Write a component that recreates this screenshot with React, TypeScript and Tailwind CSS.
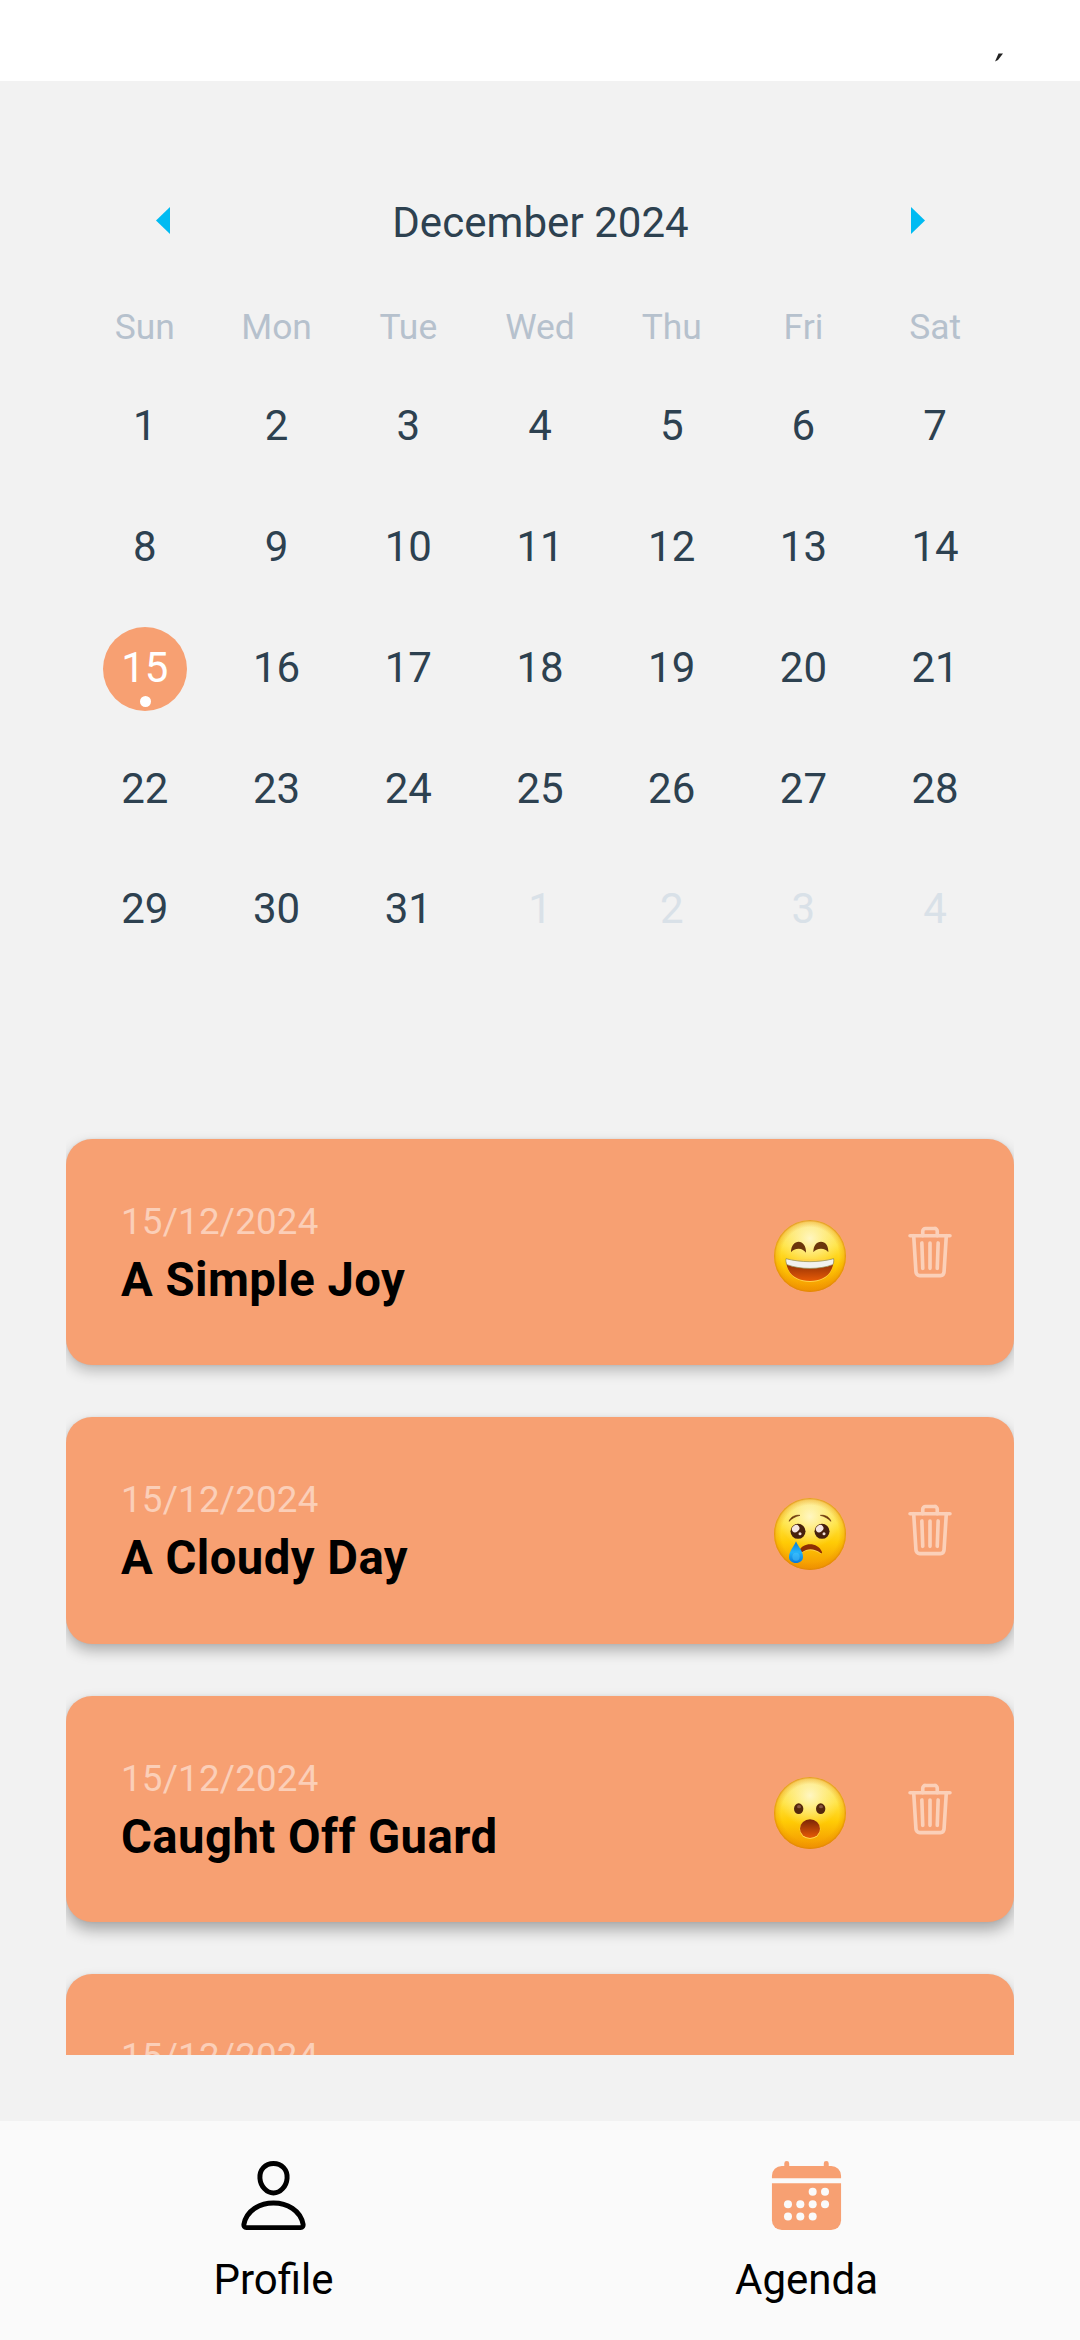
import React from "react";

type Mood = "joy" | "sad" | "wow";

const WEEKDAYS = ["Sun", "Mon", "Tue", "Wed", "Thu", "Fri", "Sat"];
const DAYS = Array.from({ length: 35 }, (_, i) => ({
  day: i < 31 ? i + 1 : i - 30,
  outside: i >= 31,
}));
// Cards lower on the screen cast a stronger shadow.
const ENTRIES: { title: string; date: string; mood: Mood; shadow: string }[] = [
  { title: "A Simple Joy", date: "15/12/2024", mood: "joy", shadow: "shadow-[0_6px_14px_rgba(0,0,0,0.24),0_0_3px_rgba(0,0,0,0.08)]" },
  { title: "A Cloudy Day", date: "15/12/2024", mood: "sad", shadow: "shadow-[0_7px_14px_rgba(0,0,0,0.27),0_0_3px_rgba(0,0,0,0.06)]" },
  { title: "Caught Off Guard", date: "15/12/2024", mood: "wow", shadow: "shadow-[0_8px_15px_rgba(0,0,0,0.31),0_0_3px_rgba(0,0,0,0.06)]" },
  { title: "", date: "15/12/2024", mood: "joy", shadow: "shadow-[0_9px_15px_rgba(0,0,0,0.31),0_0_3px_rgba(0,0,0,0.06)]" },
];

function TrashIcon() {
  return (
    <svg viewBox="0 0 512 512" className="size-[58px]" fill="none" stroke="currentColor" strokeWidth="32" strokeLinecap="round" strokeLinejoin="round">
      <path d="M112 112l20 320c.95 18.49 14.4 32 32 32h184c17.67 0 30.87-13.51 32-32l20-320" />
      <path d="M80 112h352" />
      <path d="M192 112V72a23.93 23.93 0 0 1 24-24h80a23.93 23.93 0 0 1 24 24v40M256 176v224M184 176l8 224M328 176l-8 224" />
    </svg>
  );
}

function PersonIcon() {
  return (
    <svg viewBox="0 0 512 512" className="size-[79px]" fill="none" stroke="currentColor" strokeWidth="32" strokeLinecap="round" strokeLinejoin="round">
      <path d="M344 144c-3.92 52.87-44 96-88 96s-84.15-43.12-88-96c-4-55 35-96 88-96s92 42 88 96z" />
      <path d="M256 304c-87 0-175.3 48-191.64 138.6C62.39 453.52 68.57 464 80 464h352c11.44 0 17.62-10.48 15.65-21.4C431.3 352 343 304 256 304z" />
    </svg>
  );
}

function CalendarIcon() {
  const dots = [
    [296, 232], [376, 232],
    [136, 312], [216, 312], [296, 312], [376, 312],
    [136, 392], [216, 392], [296, 392],
  ];
  return (
    <svg viewBox="0 0 512 512" className="size-[79px] text-[#f7a072]" fill="currentColor">
      <path d="M32 176H480V416a64 64 0 0 1-64 64H96a64 64 0 0 1-64-64z" />
      <path d="M32 144V128a64 64 0 0 1 64-64h16V48.450a16 16 0 0 1 32 0V64H368V48.450a16 16 0 0 1 32 0V64h16a64 64 0 0 1 64 64v16z" />
      {dots.map(([x, y]) => (
        <circle key={`${x}-${y}`} cx={x} cy={y} r="26" fill="#fafafa" />
      ))}
    </svg>
  );
}

function MoodFace({ mood, id }: { mood: Mood; id: string }) {
  const face = `face-${id}`;
  const shine = `shine-${id}`;
  const mouth = `mouth-${id}`;
  const drop = `drop-${id}`;
  const rim = `rim-${id}`;
  return (
    <svg viewBox="0 0 216 216" className="size-[72px]">
      <defs>
        <linearGradient id={face} x1="0" y1="0" x2="0" y2="1">
          <stop offset="0" stopColor="#fbe476" />
          <stop offset=".35" stopColor="#ffe33f" />
          <stop offset=".62" stopColor="#ffcb05" />
          <stop offset="1" stopColor="#f39200" />
        </linearGradient>
        <radialGradient id={shine} cx=".5" cy=".25" r=".45">
          <stop offset="0" stopColor="#fff6c2" stopOpacity="1" />
          <stop offset="1" stopColor="#fff3a0" stopOpacity="0" />
        </radialGradient>
        <radialGradient id={rim}>
          <stop offset=".8" stopColor="#e68a00" stopOpacity="0" />
          <stop offset=".94" stopColor="#e88e00" stopOpacity=".32" />
          <stop offset="1" stopColor="#dc7f0c" stopOpacity=".85" />
        </radialGradient>
        <linearGradient id={mouth} x1="0" y1="0" x2="0" y2="1">
          <stop offset="0" stopColor="#7a2506" />
          <stop offset="1" stopColor="#e85b06" />
        </linearGradient>
        <linearGradient id={drop} x1="0" y1="0" x2="0" y2="1">
          <stop offset="0" stopColor="#0a78cf" />
          <stop offset=".5" stopColor="#25b4fb" />
          <stop offset="1" stopColor="#0877d8" />
        </linearGradient>
      </defs>
      <circle cx="108" cy="108" r="108" fill={`url(#${face})`} />
      <circle cx="108" cy="108" r="105" fill={`url(#${shine})`} />
      <circle cx="108" cy="108" r="108" fill={`url(#${rim})`} />
      {mood === "joy" && (
        <g>
          <path d="M51 97C51 76 62 65 74 65s23 13 22 33c-5-7-12-12-22-12s-18 4-23 11zM118 97c0-21 10-32 23-32s23 12 22 32c-5-7-12-11-22-11s-18 4-23 11z" fill="#6b360c" />
          <path d="M36 118c0 47 32 68 72 68s71-21 71-68z" fill="#ffd24a" />
          <path d="M36 116c0 47 32 67 72 67s71-20 71-67c-40 14-105 14-143 0z" fill={`url(#${mouth})`} />
          <path d="M36 116c45 12 98 12 143 0 1 8 0 14-3 18-40 15-96 15-137 0-3-5-4-11-3-18z" fill="#f2f2ee" stroke="#8c8b4c" strokeWidth="2" />
        </g>
      )}
      {mood === "sad" && (
        <g>
          <path d="M45 70c5-13 18-20 33-18-14 3-23 9-33 18zM139 52c15-2 27 5 32 18-10-9-19-15-32-18z" fill="#6b360c" stroke="#6b360c" strokeWidth="2" strokeLinejoin="round" />
          {[72, 144].map((x) => (
            <g key={x}>
              <circle cx={x} cy="100" r="22.500" fill="#46200d" />
              <ellipse cx={x - 7} cy="92" rx="12" ry="10" transform={`rotate(-38 ${x - 7} 92)`} fill="#f5e6e1" />
              <circle cx={x + 6} cy="107" r="4.500" fill="#f0ddd5" />
            </g>
          ))}
          <path d="M78 158c14-19 49-19 64 7l-2 3c-20-14-40-15-58-2z" fill="#ffd24a" />
          <path d="M76 158c10-26 56-27 68 4 1 3-2 5-4 3-20-14-39-15-56-2z" fill="#8e2d04" />
          <path d="M66 130c6 15 21 30 21 47 0 11-9 18-21 18s-21-7-21-18c0-17 15-32 21-47z" fill={`url(#${drop})`} />
          <ellipse cx="66" cy="176" rx="11" ry="12" fill="#51caff" opacity=".45" />
        </g>
      )}
      {mood === "wow" && (
        <g>
          <ellipse cx="74" cy="95" rx="14" ry="16" fill="#55270d" />
          <ellipse cx="140" cy="95" rx="14" ry="16" fill="#55270d" />
          <ellipse cx="75" cy="89" rx="6" ry="5" fill="#885744" />
          <ellipse cx="141" cy="89" rx="6" ry="5" fill="#885744" />
          <ellipse cx="108" cy="157" rx="31" ry="29" fill="#ffd44d" />
          <ellipse cx="108" cy="155" rx="30" ry="28" fill={`url(#${mouth})`} />
        </g>
      )}
    </svg>
  );
}

function EntryCard({ title, date, mood, shadow, id }: { title: string; date: string; mood: Mood; shadow: string; id: string }) {
  return (
    <article className={`flex h-[226.600px] shrink-0 items-start rounded-[26px] bg-[#f7a072] pl-[55px] ${shadow}`}>
      <div className="flex-1 pt-[58px]">
        <p className="text-[36.750px] leading-[49px] tracking-[0.2px] text-white/50">{date}</p>
        <h2 className="pt-[6px] text-[47.250px] leading-[57px] font-bold tracking-[0.45px] text-black">{title}</h2>
      </div>
      <div className="pt-[81px] pr-[55px]">
        <MoodFace mood={mood} id={id} />
      </div>
      <div className="pt-[84px] pr-[55px] text-[#fbd0b9]">
        <TrashIcon />
      </div>
    </article>
  );
}

export default function App() {
  return (
    <div className="flex h-[2340px] w-[1080px] flex-col overflow-hidden bg-[#f2f2f2] font-['Roboto',sans-serif]">
      <header className="flex h-[81px] shrink-0 items-start justify-end bg-white pt-[53px] pr-[77px]">
        <svg viewBox="0 0 8 9" className="h-[9px] w-[8px]">
          <path d="M3.500 .5H8L3 7 0 8.500z" fill="#222" />
        </svg>
      </header>

      <section className="flex h-[1039px] shrink-0 flex-col px-[79px] pt-[101px]">
        <div className="flex h-[81px] items-center justify-between pr-[76px] pl-[77px]">
          <svg viewBox="0 0 14 27" className="mb-[4px] h-[27px] w-[14px]">
            <path d="M14 0v27L0 13.500z" fill="#00bbf2" />
          </svg>
          <h1 className="text-[42px] leading-[81px] tracking-[0.05px] text-[#2d4150]">December 2024</h1>
          <svg viewBox="0 0 14 27" className="mb-[4px] h-[27px] w-[14px]">
            <path d="M0 0v27l14-13.500z" fill="#00bbf2" />
          </svg>
        </div>
        <div className="mt-[39px] grid h-[63.400px] grid-cols-7 text-center text-[35.400px] leading-[50px] text-[#b6c1cd]">
          {WEEKDAYS.map((name) => (
            <span key={name}>{name}</span>
          ))}
        </div>
        <div className="grid grid-cols-7 text-[42px] leading-[81px]">
          {DAYS.map(({ day, outside }, i) => (
            <div key={i} className="flex h-[120.800px] items-center justify-center">
              {!outside && day === 15 ? (
                <div className="mt-[3px] flex size-[84px] flex-col items-center rounded-full bg-[#f7a072] text-white">
                  <span className="h-[69.500px]">{day}</span>
                  <span className="ml-px size-[11px] rounded-full bg-white" />
                </div>
              ) : (
                <span className={outside ? "text-[#d9e1e8]" : "text-[#2d4150]"}>{day}</span>
              )}
            </div>
          ))}
        </div>
      </section>

      <main className="mx-[66px] flex h-[935px] shrink-0 flex-col gap-[51.900px] overflow-hidden pt-[18.900px]">
        {ENTRIES.map((entry, i) => (
          <EntryCard key={i} id={String(i)} {...entry} />
        ))}
      </main>

      <nav className="mt-[66px] grid h-[219px] shrink-0 grid-cols-2 bg-[#fafafa] px-[7px] pt-[35px] text-[42px] leading-[50px] text-black">
        <div className="flex flex-col items-center">
          <PersonIcon />
          <span className="mt-[20px]">Profile</span>
        </div>
        <div className="flex flex-col items-center">
          <CalendarIcon />
          <span className="mt-[20px]">Agenda</span>
        </div>
      </nav>
    </div>
  );
}
